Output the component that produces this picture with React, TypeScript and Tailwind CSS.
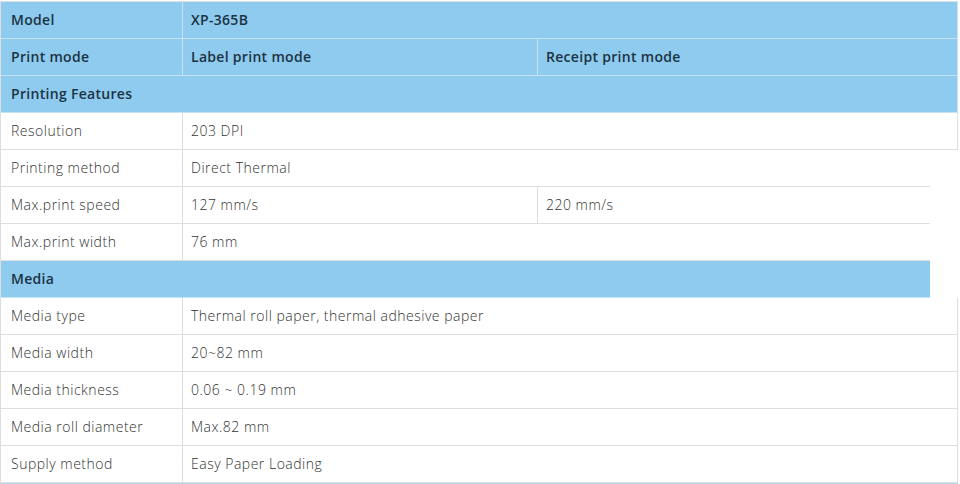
type Row =
  | { kind: "head"; cells: string[] }
  | { kind: "section"; label: string; short?: boolean }
  | { kind: "body"; cells: string[]; short?: boolean };

const rows: Row[] = [
  { kind: "head", cells: ["Model", "XP-365B"] },
  { kind: "head", cells: ["Print mode", "Label print mode", "Receipt print mode"] },
  { kind: "section", label: "Printing Features" },
  { kind: "body", cells: ["Resolution", "203 DPI"] },
  { kind: "body", cells: ["Printing method", "Direct Thermal"], short: true },
  { kind: "body", cells: ["Max.print speed", "127 mm/s", "220 mm/s"], short: true },
  { kind: "body", cells: ["Max.print width", "76 mm"], short: true },
  { kind: "section", label: "Media", short: true },
  { kind: "body", cells: ["Media type", "Thermal roll paper, thermal adhesive paper"] },
  { kind: "body", cells: ["Media width", "20~82 mm"] },
  { kind: "body", cells: ["Media thickness", "0.06 ~ 0.19 mm"] },
  { kind: "body", cells: ["Media roll diameter", "Max.82 mm"] },
  { kind: "body", cells: ["Supply method", "Easy Paper Loading"] },
];

const widths = ["w-[182px]", "w-[355px]", "flex-1"];

function SpecRow({ row }: { row: Row }) {
  if (row.kind === "section") {
    return (
      <div
        className={`flex h-[37px] items-center border-b border-[#c4e3f5] bg-[#8ecbee] pl-[10px] font-semibold tracking-[0.3px] text-[#1c3343] ${
          row.short ? "w-[929px]" : "w-full border-r border-r-[#c4e3f5]"
        }`}
      >
        {row.label}
      </div>
    );
  }

  const head = row.kind === "head";
  const short = row.kind === "body" && row.short;
  const cells = row.cells;

  return (
    <div
      className={`flex h-[37px] ${short ? "w-[929px]" : "w-full"} ${
        head
          ? "bg-[#8ecbee] font-semibold tracking-[0.3px] text-[#1c3343]"
          : "bg-white font-light tracking-[0.5px] text-[#333]"
      }`}
    >
      {cells.map((text, i) => {
        const last = i === cells.length - 1;
        const width = last ? "flex-1" : widths[i];
        const border = head ? "border-[#c4e3f5]" : "border-[#dedede]";
        const right = last && short ? "border-r-0" : "border-r";
        return (
          <div
            key={i}
            className={`flex items-center border-b ${right} ${border} ${width} ${
              i === 0 ? "pl-[10px]" : "pl-[8px]"
            }`}
          >
            {text}
          </div>
        );
      })}
    </div>
  );
}

export default function App() {
  return (
    <div className="h-[484px] w-[960px] overflow-hidden bg-white pt-px">
      <div
        className="w-[958px] border-l border-t border-[#dedede] text-[14px] leading-none"
        style={{ fontFamily: '"Open Sans", "Noto Sans", sans-serif' }}
      >
        {rows.map((row, i) => (
          <SpecRow key={i} row={row} />
        ))}
        <div className="h-px w-full bg-[#b9d9ec]" />
      </div>
    </div>
  );
}
